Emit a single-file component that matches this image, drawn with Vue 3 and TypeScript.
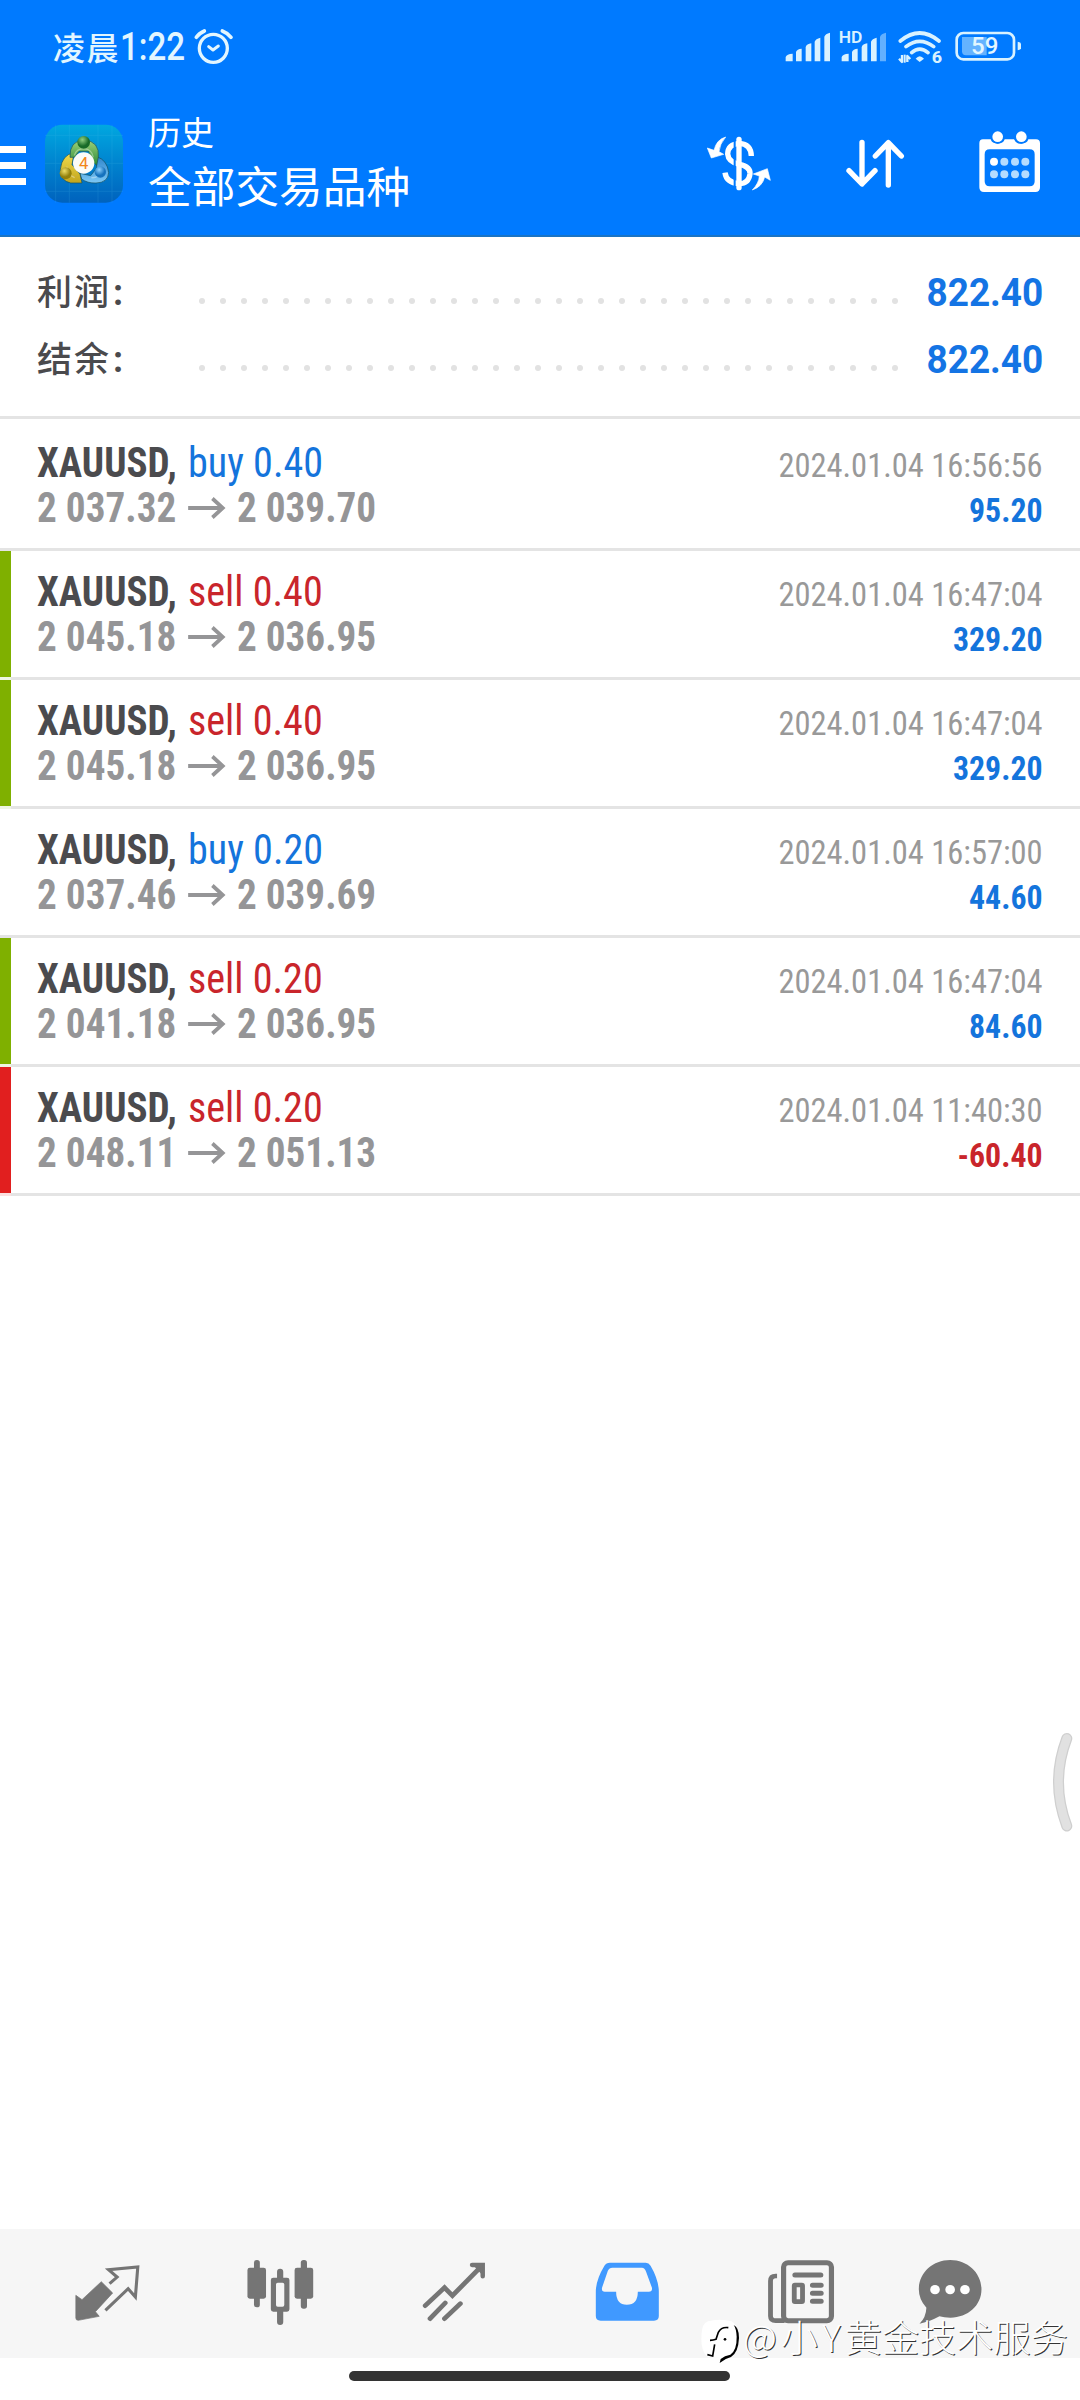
<script setup lang="ts">
interface Deal {
  side: 'buy' | 'sell'
  volume: string
  open: string
  close: string
  time: string
  profit: string
  mark?: 'take' | 'stop'
}

const summary: { label: string; value: string }[] = [
  { label: '利润', value: '822.40' },
  { label: '结余', value: '822.40' },
]

const deals: Deal[] = [
  { side: 'buy', volume: '0.40', open: '2 037.32', close: '2 039.70', time: '2024.01.04 16:56:56', profit: '95.20' },
  { side: 'sell', volume: '0.40', open: '2 045.18', close: '2 036.95', time: '2024.01.04 16:47:04', profit: '329.20', mark: 'take' },
  { side: 'sell', volume: '0.40', open: '2 045.18', close: '2 036.95', time: '2024.01.04 16:47:04', profit: '329.20', mark: 'take' },
  { side: 'buy', volume: '0.20', open: '2 037.46', close: '2 039.69', time: '2024.01.04 16:57:00', profit: '44.60' },
  { side: 'sell', volume: '0.20', open: '2 041.18', close: '2 036.95', time: '2024.01.04 16:47:04', profit: '84.60', mark: 'take' },
  { side: 'sell', volume: '0.20', open: '2 048.11', close: '2 051.13', time: '2024.01.04 11:40:30', profit: '-60.40', mark: 'stop' },
]
</script>

<template>
  <div class="screen">
    <header class="header">
      <div class="status">
        <div class="clock">凌晨<span class="digits">1:22</span></div>
        <svg class="alarm" width="42" height="38" viewBox="580 80 126 114" fill="none" stroke="#e2f6ff" stroke-linecap="round" stroke-linejoin="round">
          <circle cx="641" cy="144" r="42" stroke-width="10" />
          <path d="M627 139 L640 149 L656 137" stroke-width="9" />
          <path d="M590 111 Q598 99 614 92 M668 92 Q684 98 694 111" stroke-width="11" />
        </svg>
        <svg class="indicators" width="240" height="48" viewBox="312 88 720 144">
          <g fill="#d9f2ff">
            <path d="M317 185V172q3-9 21-10v23zM348 185V157q3-9 17-10v38zM377 185V142q3-9 17-11v54zM404 185V126q3-9 17-12v71zM433 185V111q3-9 17-12v86z" />
            <path d="M485 185V172q3-9 21-10v23zM516 185V157q3-9 17-10v38zM545 185V142q3-9 17-11v54zM573 185V126q3-9 17-12v71z" />
            <path d="M600 185V111q3-9 18-12v86z" opacity=".45" />
            <text x="476" y="129" font-size="47" font-weight="600" textLength="71" lengthAdjust="spacingAndGlyphs">HD</text>
            <path d="M719 187 L707 177 Q719 162 732 177Z" />
            <text x="755" y="190" font-size="52" font-weight="800" textLength="31" lengthAdjust="spacingAndGlyphs">6</text>
          </g>
          <g fill="none" stroke="#d9f2ff" stroke-width="11" stroke-linecap="round">
            <path d="M661 124 Q719 76 777 124M678 141 Q719 109 761 141M695 159 Q719 138 744 159" />
          </g>
          <path d="M657 177l9 10V166M682 187V169l9 9" fill="none" stroke="#d9f2ff" stroke-width="7" stroke-linejoin="round" />
          <path d="M674 165v24" stroke="#d9f2ff" stroke-width="6" />
          <rect x="830" y="100" width="172" height="79" rx="20" fill="none" stroke="#d9f2ff" stroke-width="8" />
          <path d="M846 112h74v55h-62q-12 0-12-12z" fill="#64b3ff" />
          <path d="M1013 126q10 2 10 6v14q0 4-10 6z" fill="#d9f2ff" />
          <text x="873" y="164" font-size="70" font-weight="500" fill="#e2f6ff" textLength="82" lengthAdjust="spacingAndGlyphs">59</text>
        </svg>
      </div>

      <div class="bar">
        <div class="burger"><i></i><i></i><i></i></div>
        <svg class="app-icon" width="80" height="80" viewBox="0 0 240 240">
          <defs>
            <linearGradient id="tile" x1="0" y1="0" x2="0" y2="1">
              <stop offset="0" stop-color="#00a8e0" />
              <stop offset=".5" stop-color="#0083cf" />
              <stop offset="1" stop-color="#0062bd" />
            </linearGradient>
            <linearGradient id="green" x1="0" y1="0" x2="0" y2="1">
              <stop offset="0" stop-color="#9ed27a" />
              <stop offset="1" stop-color="#2b8a35" />
            </linearGradient>
            <linearGradient id="gold" x1="0" y1="0" x2="0" y2="1">
              <stop offset="0" stop-color="#f3dc4c" />
              <stop offset="1" stop-color="#c1a51e" />
            </linearGradient>
            <linearGradient id="azure" x1="0" y1="0" x2="0" y2="1">
              <stop offset="0" stop-color="#2f86cc" />
              <stop offset="1" stop-color="#7cc8f5" />
            </linearGradient>
            <radialGradient id="ballg" cx=".4" cy=".3"><stop offset="0" stop-color="#90cf80" /><stop offset="1" stop-color="#186b28" /></radialGradient>
            <radialGradient id="bally" cx=".4" cy=".3"><stop offset="0" stop-color="#f0df68" /><stop offset="1" stop-color="#92800c" /></radialGradient>
            <radialGradient id="ballb" cx=".4" cy=".3"><stop offset="0" stop-color="#8fd2ff" /><stop offset="1" stop-color="#1672bd" /></radialGradient>
          </defs>
          <rect x="3" y="2" width="234" height="234" rx="52" fill="url(#tile)" />
          <path d="M3 34H237M3 118H237M3 202H237M35 2V236M76 2V236M162 2V236M204 2V236" stroke="#54c4ee" stroke-width="2" opacity=".22" />
          <g stroke="#164f5c" stroke-width="2">
            <path d="M158 98 Q190 108 194 146 Q192 176 156 177 Q130 178 113 165 L108 148 L140 155 L158 132Z" fill="url(#azure)" />
            <path d="M90 86 Q54 92 49 136 Q50 172 80 177 L114 177 L108 150 L84 122Z" fill="url(#gold)" />
            <path d="M78 100 Q76 50 120 48 Q168 52 163 100 L158 124 L140 108 L134 82 L105 82 L92 100Z" fill="url(#green)" />
          </g>
          <path d="M91 94 Q97 74 120 74 Q144 76 148 100M69 128 Q66 152 92 161M142 161 Q166 164 176 130" fill="none" stroke="#fff" stroke-width="4" opacity=".35" />
          <circle cx="119" cy="55" r="19" fill="url(#ballg)" />
          <circle cx="65" cy="148" r="18" fill="url(#bally)" />
          <circle cx="169" cy="144" r="17" fill="url(#ballb)" />
          <circle cx="119" cy="117" r="32" fill="#fbfbf8" />
          <text x="119" y="135" font-size="50" text-anchor="middle" fill="#f28518">4</text>
        </svg>
        <div class="titles">
          <div class="t1">历史</div>
          <div class="t2">全部交易品种</div>
        </div>
        <svg class="a1" width="66" height="56" viewBox="80 405 198 168">
          <path d="M216 468 Q215 432 180 430 Q146 432 145 462 Q147 486 180 493 Q214 500 212 522 Q208 551 180 551 Q141 549 137 518" fill="none" stroke="#fff" stroke-width="16" />
          <path d="M166 418V568" stroke="#007aff" stroke-width="6" />
          <path d="M179 418V563" stroke="#fff" stroke-width="16" stroke-linecap="round" />
          <path d="M139 411 Q111 419 104 451 L84 444 L96 474 L133 463 L119 455 Q121 432 139 411ZM219 570 Q239 549 240 528 L222 522 L264 506 L273 541 L256 531 Q249 560 219 570Z" fill="#fff" stroke="#fff" stroke-width="2" stroke-linejoin="round" />
        </svg>
        <svg class="a2" width="60" height="52" viewBox="496 414 180 156" fill="none" stroke="#fff" stroke-width="16" stroke-linecap="round" stroke-linejoin="round">
          <path d="M547 427V551M508 512L547 552L586 512M626 555V429M587 468L626 428L665 468" />
        </svg>
        <svg class="a3" width="64" height="64" viewBox="896 392 192 192">
          <path fill-rule="evenodd" fill="#fff" d="M911 420H934Q938 433 955 433Q972 433 976 420H1004Q1009 433 1026 433Q1043 433 1047 420H1070Q1082 420 1082 432V564Q1082 578 1068 578H914Q900 578 900 564V432Q900 420 911 420ZM931 450Q916 450 916 465V546Q916 561 931 561H1051Q1066 561 1066 546V465Q1066 450 1051 450Z" />
          <circle cx="955" cy="412" r="21" fill="#007aff" /><circle cx="1026" cy="412" r="21" fill="#007aff" />
          <circle cx="955" cy="412" r="16" fill="#fff" /><circle cx="1026" cy="412" r="16" fill="#fff" />
          <circle cx="944" cy="487" r="12" fill="#fff" />
          <g fill="#b4dcff">
            <circle cx="975" cy="487" r="12" /><circle cx="1007" cy="487" r="12" /><circle cx="1038" cy="487" r="12" />
            <circle cx="944" cy="525" r="12" /><circle cx="975" cy="525" r="12" /><circle cx="1007" cy="525" r="12" /><circle cx="1038" cy="525" r="12" />
          </g>
        </svg>
      </div>
    </header>

    <section class="summary">
      <div v-for="item in summary" :key="item.label" class="sum-row">
        <span class="sum-label">{{ item.label }}<b>:</b></span>
        <span class="dots"><i v-for="n in 34" :key="n"></i></span>
        <span class="sum-value">{{ item.value }}</span>
      </div>
    </section>

    <main class="list">
      <article v-for="(d, i) in deals" :key="i" class="deal" :class="d.mark">
        <div class="left">
          <div class="line"><b>XAUUSD,</b><span class="order" :class="d.side">{{ d.side }} {{ d.volume }}</span></div>
          <div class="line prices">
            <span>{{ d.open }}</span>
            <svg width="42" height="22" viewBox="0 0 42 22" fill="none" stroke="#959597" stroke-width="4">
              <path d="M1 11H38M27 1.500L38 11L27 20.500" />
            </svg>
            <span>{{ d.close }}</span>
          </div>
        </div>
        <div class="right">
          <div class="time">{{ d.time }}</div>
          <div class="profit" :class="{ loss: d.profit.startsWith('-') }">{{ d.profit }}</div>
        </div>
      </article>
    </main>

    <svg class="handle" width="24" height="104" viewBox="1050 1730 24 104" fill="none" stroke-linecap="round">
      <path d="M1066.800 1738.500Q1050.200 1782 1066.800 1826" stroke="#cfcfcf" stroke-width="11" />
      <path d="M1066.800 1738.500Q1050.200 1782 1066.800 1826" stroke="#e1e1e1" stroke-width="8.500" />
    </svg>

    <nav class="nav">
      <div class="tab">
        <svg viewBox="207 145 210 210" preserveAspectRatio="none">
          <path d="M295 216L328 250L278 306L289 320L228 332Q221 332 221 325V257L239 270Z" fill="#757575" stroke="#757575" stroke-width="2" stroke-linejoin="round" />
          <path d="M319 222L341 202L316 180L401 172L394 262L373 237L307 302" fill="none" stroke="#757575" stroke-width="9" />
        </svg>
      </div>
      <div class="tab">
        <svg viewBox="708 145 210 210" preserveAspectRatio="none" fill="#757575">
          <rect x="737" y="151" width="17" height="142" rx="8" /><rect x="718" y="174" width="54" height="93" rx="7" />
          <rect x="873" y="151" width="18" height="146" rx="8" /><rect x="855" y="174" width="54" height="93" rx="7" />
          <path d="M804 215V186Q804 177 813 177Q822 177 822 186V215ZM804 296V337Q804 346 813 346Q822 346 822 337V296Z" />
          <path fill-rule="evenodd" d="M793 204H833Q840 204 840 211V299Q840 306 833 306H793Q786 306 786 299V211Q786 204 793 204ZM806 219Q801 219 801 224V286Q801 291 806 291H820Q825 291 825 286V224Q825 219 820 219Z" />
        </svg>
      </div>
      <div class="tab">
        <svg viewBox="1211 145 210 210" preserveAspectRatio="none" fill="none" stroke="#757575" stroke-width="14" stroke-linecap="round">
          <path d="M1232 288L1288 234L1311 258L1392 173M1246 327L1290 280M1288 327L1334 282" />
          <path d="M1368 166H1399V200" stroke-width="13" />
          <path d="M1378 170H1396V190Z" fill="#757575" stroke-width="6" />
        </svg>
      </div>
      <div class="tab">
        <svg viewBox="148 145 210 210" preserveAspectRatio="none">
          <path fill-rule="evenodd" fill="#4099ff" d="M203 159H307Q316 159 321 168Q344 209 345 244V319Q345 333 331 333H176Q162 333 162 319V244Q163 209 187 168Q192 159 203 159ZM210 174Q201 174 197 183L180 234Q178 246 188 246H221Q221 285 252 285Q284 285 284 246H316Q327 246 325 234L308 186Q304 174 296 174Z" />
        </svg>
      </div>
      <div class="tab">
        <svg viewBox="655 145 210 210" preserveAspectRatio="none" fill="none" stroke="#757575">
          <rect x="709" y="159" width="139" height="174" rx="13" stroke-width="15" />
          <path d="M690 199H686Q671 199 671 214V319Q671 333 686 333H712" stroke-width="14" />
          <path d="M742 196H817M793 227H818M793 251H818M793 275H818" stroke-width="15" stroke-linecap="round" />
          <rect x="740" y="226" width="24" height="50" rx="2" stroke-width="14" />
        </svg>
      </div>
      <div class="tab last">
        <svg viewBox="1088 145 210 210" preserveAspectRatio="none" fill="#757575">
          <path d="M1193 151C1245 151 1284 191 1284 239C1284 288 1244 324 1194 324C1181 324 1171 322 1162 320Q1130 338 1104 342Q1123 323 1124 294Q1102 270 1102 239C1102 190 1142 151 1193 151Z" />
          <g fill="#fff"><circle cx="1149" cy="240" r="14" /><circle cx="1193" cy="240" r="14" /><circle cx="1236" cy="240" r="14" /></g>
        </svg>
      </div>
    </nav>

    <footer class="home"><i></i></footer>

    <div class="watermark">
      <svg width="40" height="46" viewBox="12 24 120 138">
        <path d="M36 34Q70 24 106 34Q124 40 125 80Q124 128 100 140Q84 144 72 156L73 144L36 141Q22 132 17 104Q14 70 21 48Q26 37 36 34Z" fill="#fff" />
        <path d="M113 45Q129 52 129 84Q127 128 105 141Q86 146 71 159L74 147Q86 137 103 134Q123 120 122 80Q121 56 113 45Z" fill="#000" />
        <path d="M97 53Q76 50 67 67L60 88Q52 91 42 91M56 103L50 138L34 134" fill="none" stroke="#000" stroke-width="5" />
        <circle cx="87" cy="88" r="4" fill="#000" />
      </svg>
      <span class="handle-name"><span class="wide">@小Y</span>黄金技术服务</span>
    </div>
  </div>
</template>

<style>
body {
  margin: 0;
  background: #fff;
}
</style>

<style scoped>
.screen {
  position: relative;
  width: 1080px;
  height: 2400px;
  display: flex;
  flex-direction: column;
  overflow: hidden;
  background: #fff;
  font-family: Roboto, "Noto Sans CJK SC", sans-serif;
}
svg {
  display: block;
  flex: none;
}
.header {
  height: 237px;
  box-sizing: border-box;
  background: #007aff;
  border-bottom: 2px solid #1b74c4;
  color: #fff;
}
.status {
  height: 94px;
  display: flex;
  align-items: flex-start;
}
.clock {
  margin: 27px 0 0 53px;
  width: 140px;
  font: 500 32px/40px Roboto, "Noto Sans CJK SC", sans-serif;
  letter-spacing: 1.500px;
  color: #e2f6ff;
  white-space: nowrap;
}
.digits {
  display: inline-block;
  font-size: 38px;
  font-weight: 500;
  letter-spacing: 0;
  transform: scaleX(0.87);
  transform-origin: left;
}
.alarm {
  margin-top: 27px;
}
.indicators {
  margin: 29px 0 0 549px;
}
.bar {
  height: 141px;
  display: flex;
  align-items: flex-start;
}
.burger {
  width: 26px;
  margin-top: 52px;
  display: flex;
  flex-direction: column;
  gap: 9px;
}
.burger i {
  height: 7px;
  background: #fff;
}
.app-icon {
  margin: 30px 0 0 18px;
}
.titles {
  width: 540px;
  margin: 17px 0 0 24px;
}
.t1 {
  font-size: 33px;
  line-height: 46px;
}
.t2 {
  font-size: 43.700px;
  line-height: 62px;
}
.a1 {
  margin: 41px 0 0 18px;
}
.a2 {
  margin: 44px 0 0 73px;
}
.a3 {
  margin: 36px 0 0 73px;
}
.summary {
  height: 179px;
  box-sizing: border-box;
  padding: 22px 37px 0;
}
.sum-row {
  display: flex;
  height: 67px;
  align-items: center;
}
.sum-label {
  width: 162px;
  margin-top: -6px;
  font: 500 35px/67px "Noto Sans CJK SC", sans-serif;
  letter-spacing: 2px;
  color: #4a4a4d;
}
.sum-label b {
  margin-left: 2px;
  font: 700 36px/60px Roboto, sans-serif;
}
.dots {
  display: flex;
  gap: 15px;
  margin-top: 16px;
}
.dots i {
  width: 6px;
  height: 6px;
  border-radius: 50%;
  background: #e2e2e2;
}
.sum-value {
  margin-left: auto;
  font-size: 38.400px;
  font-weight: 700;
  color: #1474e4;
  transform: scaleX(0.963);
  transform-origin: right;
}
.list {
  border-top: 3px solid #e4e4e4;
  padding-top: 3px;
  flex: 1;
}
.deal {
  height: 129px;
  box-sizing: border-box;
  display: flex;
  justify-content: space-between;
  padding: 18px 37px 0 26px;
  border-left: 11px solid transparent;
  background: linear-gradient(#e4e4e4, #e4e4e4) left bottom / 100% 3px no-repeat border-box;
  font-stretch: condensed;
  font-size: 42px;
  line-height: 45px;
  white-space: nowrap;
}
.take,
.stop {
  border-image: linear-gradient(#7fb000 126px, #eef6e2 126px) 0 0 0 11;
  border-left-width: 11px;
}
.stop {
  border-image: linear-gradient(#e11f1f 126px, #fbe0e0 126px) 0 0 0 11;
}
.line {
  display: flex;
  align-items: center;
  transform-origin: left;
}
.line b {
  width: 151px;
  color: #4b4b4e;
  transform: scaleX(0.93);
  transform-origin: left;
}
.order {
  transform: scaleX(0.955);
  transform-origin: left;
}
.buy {
  color: #1474dc;
}
.sell {
  color: #c9252b;
}
.prices {
  font-weight: 700;
  color: #959597;
  transform: scaleX(0.933);
}
.prices svg {
  margin: 0 11px 0 12px;
}
.right {
  padding-top: 3px;
  text-align: right;
  font-size: 34px;
}
.time {
  color: #999;
  transform: scaleX(0.955);
  transform-origin: right;
}
.profit {
  font-weight: 700;
  color: #1474dc;
  transform: scaleX(0.936);
  transform-origin: right;
}
.loss {
  color: #c9252b;
}
.handle {
  position: absolute;
  left: 1050px;
  top: 1730px;
}
.nav {
  height: 129px;
  display: flex;
  padding-left: 20px;
  background: #f6f6f6;
}
.tab {
  width: 173.500px;
  display: flex;
  justify-content: center;
  padding-top: 29.300px;
}
.tab.last {
  width: 126px;
}
.tab svg {
  width: 72.300px;
  height: 70px;
}
.home {
  height: 42px;
  display: flex;
  align-items: flex-start;
}
.home i {
  width: 381px;
  height: 10px;
  margin: 13px 0 0 349px;
  border-radius: 5px;
  background: #333;
}
.watermark {
  position: absolute;
  left: 700px;
  top: 2318px;
  display: flex;
  align-items: flex-start;
  font: 300 37.200px/38px "Noto Sans CJK SC", sans-serif;
  color: #fff;
  text-shadow: 1px 1px 0 #333;
  white-space: nowrap;
}
.handle-name {
  margin: -1px 0 0 3px;
}
.wide {
  letter-spacing: 4px;
}
</style>
